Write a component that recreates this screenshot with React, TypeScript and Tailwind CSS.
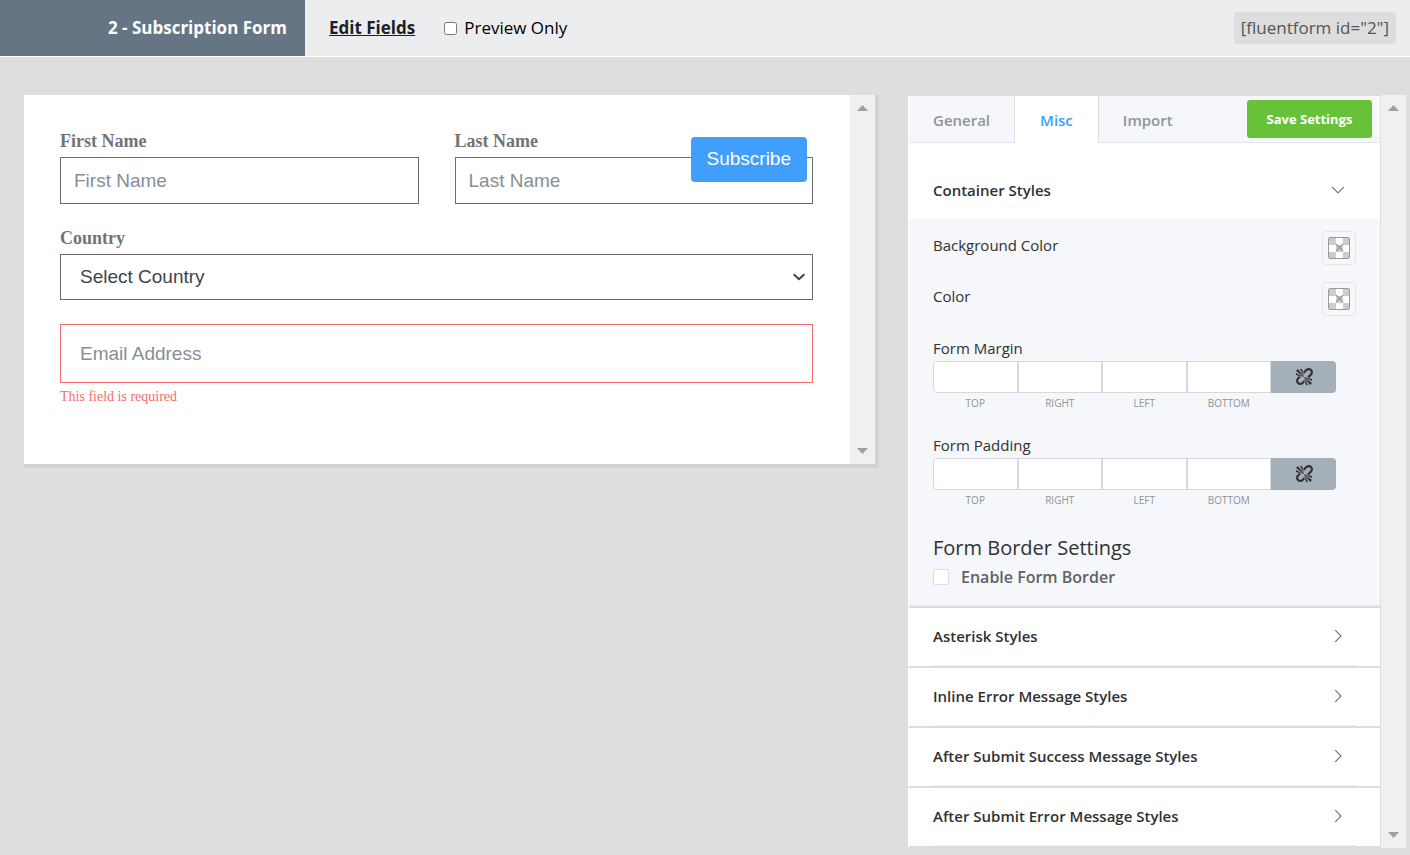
import { useState } from 'react';

const STYLE_SECTIONS = [
  'Asterisk Styles',
  'Inline Error Message Styles',
  'After Submit Success Message Styles',
  'After Submit Error Message Styles',
];

const SIDES = ['Top', 'Right', 'Left', 'Bottom'];

function ScrollRail() {
  return (
    <div aria-hidden="true" className="flex w-[25px] shrink-0 flex-col items-center justify-between bg-[#f0f0f0] py-2.5 text-[#a0a0a0]">
      <svg width="11" height="6" viewBox="0 0 11 6" fill="currentColor"><path d="M5.5 0 11 6H0z" /></svg>
      <svg width="11" height="6" viewBox="0 0 11 6" fill="currentColor"><path d="M0 0h11L5.5 6z" /></svg>
    </div>
  );
}

function Chevron({ open = false }: { open?: boolean }) {
  return open ? (
    <svg width="14" height="14" viewBox="0 0 14 14" fill="none" stroke="#4c6a86" strokeWidth="1.1"><path d="M1.2 4.2 7 9.8l5.8-5.6" /></svg>
  ) : (
    <svg width="14" height="14" viewBox="0 0 14 14" fill="none" stroke="#6a6d72" strokeWidth="1.1"><path d="M4.3 0.2 10 6l-5.7 5.8" /></svg>
  );
}

function UnlinkIcon() {
  return (
    <svg width="20" height="20" viewBox="0 0 20 20" fill="#303133">
      <path d="M17.74 2.26c1.68 1.69 1.68 4.41 0 6.1l-1.53 1.52c-.32.33-.69.58-1.08.77L13 10l1.69-1.64.76-.77.76-.76c.84-.84.84-2.2 0-3.04-.84-.85-2.2-.85-3.04 0l-.77.76-.76.76L10 7l-.65-2.14c.19-.38.44-.75.77-1.07l1.52-1.53c1.69-1.68 4.42-1.68 6.1 0zM2 4l8 6-6-8zm4-2l4 8-2-8H6zM2 6l8 4-8-2V6zm7.36 7.69L10 13l.74 2.35-1.38 1.39c-1.69 1.68-4.41 1.68-6.1 0-1.68-1.68-1.68-4.42 0-6.1l1.39-1.38L7 10l-.69.64-1.52 1.53c-.85.84-.85 2.2 0 3.04.84.85 2.2.85 3.04 0zM18 16l-8-6 6 8zm-4 2l-4-8 2 8h2zm4-4l-8-4 8 2v2z" />
    </svg>
  );
}

function ColorRow({ label }: { label: string }) {
  return (
    <div className="flex items-start justify-between">
      <span className="leading-7">{label}</span>
      <button type="button" aria-label={label} className="flex size-[34px] items-center justify-center rounded border border-[#e6e6e6]">
        <svg width="22" height="22" viewBox="0 0 22 22">
          <rect x="0.5" y="0.5" width="21" height="21" rx="1.5" fill="#fff" />
          <path d="M1 1h7v7H1zM15 1h6v7h-6zM8 8h7v7H8zM1 15h7v6H1zM15 15h6v6h-6z" fill="#ccc" />
          <rect x="0.5" y="0.5" width="21" height="21" rx="1.5" fill="none" stroke="#999" />
          <path d="m8 7 7 7M15 7l-7 7" stroke="#999" strokeWidth="1.1" />
        </svg>
      </button>
    </div>
  );
}

function SpacingField({ label }: { label: string }) {
  return (
    <fieldset className="pr-5">
      <legend className="leading-[25px]">{label}</legend>
      <div className="flex items-start">
        <div className="grid flex-1 grid-cols-4">
          {SIDES.map((side) => (
            <label key={side} className="flex flex-col text-center text-[10px] leading-5 text-[#909399] uppercase">
              <input type="text" className={`h-8 w-full border border-[#d5d9df] bg-white px-2 text-sm outline-none ${side === 'Top' ? 'rounded-l' : ''}`} />
              {side}
            </label>
          ))}
        </div>
        <button type="button" aria-label="Link values" className="flex h-8 w-[65px] items-center justify-center rounded-r bg-[#a4afb7]">
          <UnlinkIcon />
        </button>
      </div>
    </fieldset>
  );
}

function FormPreview() {
  return (
    <section className="flex min-w-0 flex-1 border-r-4 border-b-4 border-[#d2d2d2] bg-white">
      <form className="relative flex-1 pt-9 pr-[37px] pb-[57px] pl-9 font-['Liberation_Sans',Arial,sans-serif] text-[19px]">
        <div className="grid grid-cols-2 gap-9">
          {['First Name', 'Last Name'].map((name) => (
            <label key={name} className="block">
              <span className="mb-1.5 block font-['Liberation_Serif',serif] text-lg leading-5 font-bold text-[#737373]">{name}</span>
              <input type="text" placeholder={name} className="h-[47px] w-full border border-[#6c6d70] px-[13px] outline-none placeholder:text-[#868e96]" />
            </label>
          ))}
        </div>
        <label className="mt-6 block">
          <span className="mb-1.5 block font-['Liberation_Serif',serif] text-lg leading-5 font-bold text-[#737373]">Country</span>
          <span className="grid items-center">
            <select className="col-start-1 row-start-1 h-[46px] w-full appearance-none border border-[#6c6d70] bg-white px-[19px] text-[#40444a] outline-none">
              <option>Select Country</option>
            </select>
            <svg className="pointer-events-none col-start-1 row-start-1 mr-2 justify-self-end" width="12" height="8" viewBox="0 0 12 8" fill="none" stroke="#3c3f44" strokeWidth="2"><path d="m0.7 1.2 5.3 5 5.3-5" /></svg>
          </span>
        </label>
        <input type="email" aria-label="Email Address" placeholder="Email Address" className="mt-6 block h-[59px] w-full border border-[#f56c6c] px-[19px] outline-none placeholder:text-[#868e96]" />
        <p className="mt-1 font-['Liberation_Serif',serif] text-sm text-[#f56c6c]">This field is required</p>
        <button type="button" className="absolute top-[42px] right-[43px] h-[45px] rounded bg-[#409eff] px-4 text-white">Subscribe</button>
      </form>
      <ScrollRail />
    </section>
  );
}

function StylePanel() {
  const [tab, setTab] = useState('Misc');
  return (
    <aside className="flex w-[498px] shrink-0">
      <div className="mt-px flex-1 border-r border-l border-r-[#dcdfe6] border-l-white bg-white text-[15px] text-[#303133]">
        <div className="flex h-[47px] bg-[#f5f7fa]">
          {['General', 'Misc', 'Import'].map((name) => (
            <button
              key={name}
              type="button"
              onClick={() => setTab(name)}
              className={
                tab === name
                  ? 'border-r border-r-[#dcdfe6] bg-white px-[25px] pt-0.5 font-semibold text-[#409eff]'
                  : 'border-b border-b-[#dfe4ed] px-6 pt-0.5 font-semibold text-[#909399] first:border-r first:border-r-[#dcdfe6]'
              }
            >
              {name}
            </button>
          ))}
          <div className="flex flex-1 items-start justify-end border-b border-[#dfe4ed] pt-1 pr-2">
            <button type="button" className="h-[38px] w-[125px] rounded-[3px] bg-[#67c23a] pt-0.5 text-[13px] font-bold text-white">Save Settings</button>
          </div>
        </div>

        <button type="button" className="mt-[18px] flex h-[58px] w-full items-center justify-between pr-[35px] pl-6 font-semibold">
          Container Styles
          <Chevron open />
        </button>
        <div className="border-b border-[#ebeef5] bg-[#f5f7fb] px-6 pt-3 pb-3.5">
          <div className="flex flex-col gap-[17px]">
            <ColorRow label="Background Color" />
            <ColorRow label="Color" />
          </div>
          <div className="mt-5 flex flex-col gap-5">
            <SpacingField label="Form Margin" />
            <SpacingField label="Form Padding" />
          </div>
          <h3 className="mt-[23px] text-xl leading-[30px] font-normal">Form Border Settings</h3>
          <label className="flex items-center gap-3 text-base leading-7 font-semibold text-[#606266]">
            <input type="checkbox" className="size-4 appearance-none rounded-xs border border-[#dcdfe6] bg-white" />
            Enable Form Border
          </label>
        </div>

        {STYLE_SECTIONS.map((title) => (
          <div key={title} className="border-t-2 border-[#ddd] px-6 last:border-b-2">
            <button type="button" className="flex h-[58px] w-full items-center justify-between border-b border-[#ebeef5] pr-[11px] font-semibold">
              {title}
              <Chevron />
            </button>
          </div>
        ))}
      </div>
      <ScrollRail />
    </aside>
  );
}

export default function App() {
  return (
    <div className="min-h-screen bg-[#dedede] font-['Open_Sans','Noto_Sans',sans-serif]">
      <header className="flex h-[57px] items-center border-b border-white bg-[#ebedee] pr-3.5 text-[17px] text-[#1d2127]">
        <h1 className="flex w-[305px] items-center justify-end self-stretch bg-[#667584] pr-[18px] font-bold text-white">2 - Subscription Form</h1>
        <a href="#fields" className="ml-6 font-bold underline">Edit Fields</a>
        <label className="ml-[29px] flex items-center gap-[7px] text-black">
          <input type="checkbox" className="size-[13px]" />
          Preview Only
        </label>
        <code className="ml-auto rounded bg-[#ddd] px-[7px] font-['Open_Sans','Noto_Sans',sans-serif] leading-8 text-[#555]">[fluentform id="2"]</code>
      </header>
      <main className="flex items-start gap-[29px] pt-[38px] pr-1 pl-6">
        <FormPreview />
        <StylePanel />
      </main>
    </div>
  );
}
